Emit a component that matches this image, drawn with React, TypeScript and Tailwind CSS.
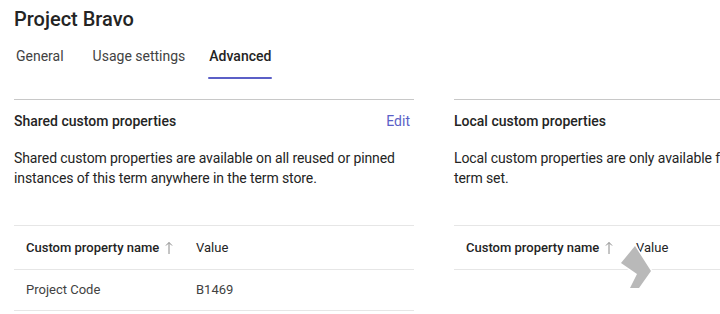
import React from 'react';

const FONT = { fontFamily: 'Roboto, "Noto Sans", sans-serif' };

const tabs = [
  { label: 'General', cls: '' },
  { label: 'Usage settings', cls: 'ml-[29px]' },
  { label: 'Advanced', cls: 'ml-[24px]' },
];

function SortUp() {
  return (
    <svg className="ml-[6px]" width="8" height="14" viewBox="0 0 8 14">
      <path d="M4 1.5 V13 M1 4.5 L4 1.5 L7 4.5" fill="none" stroke="#8a8a8a" strokeWidth="1" />
    </svg>
  );
}

function PropTable({ rows }: { rows: { name: string; value: string }[] }) {
  return (
    <div className="border-t border-[#e6e6e6]">
      <div className="flex h-[44px] items-center border-b border-[#e6e6e6] text-[13px] text-[#242424]">
        <div className="flex w-[182px] items-center whitespace-nowrap pl-3 font-medium">
          Custom property name
          <SortUp />
        </div>
        <div>Value</div>
      </div>
      {rows.map((r) => (
        <div key={r.name} className="flex h-[41px] items-center border-b border-[#e6e6e6] text-[13px] text-[#424242]">
          <div className="w-[182px] pl-3">{r.name}</div>
          <div>{r.value}</div>
        </div>
      ))}
    </div>
  );
}

function Section({
  title,
  desc,
  edit,
  rows,
  wide,
}: {
  title: string;
  desc: string;
  edit?: boolean;
  wide?: boolean;
  rows: { name: string; value: string }[];
}) {
  return (
    <div className={(wide ? 'w-[430px]' : 'w-[400px]') + ' shrink-0 border-t border-[#c8c8c8]'}>
      <div className="flex h-[42px] items-center justify-between">
        <div className="text-[14px] font-medium text-[#242424]">{title}</div>
        {edit && <div className="pr-[4px] text-[14px] text-[#5b5fc7]">Edit</div>}
      </div>
      <p className="mt-[6px] h-[77px] text-[14px] leading-[20px] tracking-[-0.1px] text-[#242424]">{desc}</p>
      <PropTable rows={rows} />
    </div>
  );
}

export default function App() {
  return (
    <div className="relative h-[314px] w-[720px] overflow-hidden bg-white" style={FONT}>
      <div className="px-[14px] pt-[5px]">
        <h1 className="text-[20px] font-medium leading-[28px] text-[#242424]">Project Bravo</h1>
        <div className="mt-[13px] flex pl-[2px]">
          {tabs.map((t) => (
            <div key={t.label} className={'flex flex-col items-center ' + t.cls}>
              <span
                className={
                  t.label === 'Advanced'
                    ? 'text-[14px] font-medium leading-[20px] text-[#242424]'
                    : 'text-[14px] leading-[20px] text-[#424242]'
                }
              >
                {t.label}
              </span>
              <span
                className={
                  t.label === 'Advanced'
                    ? 'mt-[11px] h-[2px] w-[calc(100%+2px)] rounded-full bg-[#5b5fc7]'
                    : 'mt-[11px] h-[2px] w-full'
                }
              />
            </div>
          ))}
        </div>
        <div className="mt-[20px] flex gap-[40px]">
          <Section
            title="Shared custom properties"
            edit
            desc="Shared custom properties are available on all reused or pinned instances of this term anywhere in the term store."
            rows={[{ name: 'Project Code', value: 'B1469' }]}
          />
          <Section
            title="Local custom properties"
            wide
            desc="Local custom properties are only available for this term within this term set."
            rows={[]}
          />
        </div>
      </div>
      {/* drag/scroll chevron overlay */}
      <svg className="absolute left-[618px] top-[240px]" width="38" height="50" viewBox="0 0 38 50">
        <path
          d="M17 6 L33 31 L21 48 L12 48 L19 34 L3 23 Z"
          fill="#b9b9b9"
          stroke="#ffffff"
          strokeWidth="3"
          strokeLinejoin="round"
          paintOrder="stroke"
        />
      </svg>
    </div>
  );
}
